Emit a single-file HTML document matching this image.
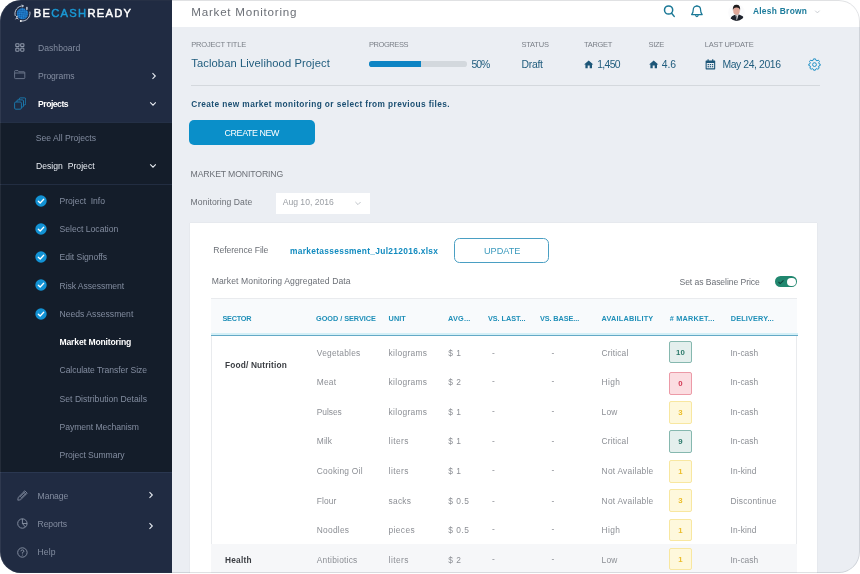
<!DOCTYPE html>
<html><head><meta charset="utf-8"><title>Market Monitoring</title>
<style>
html,body{margin:0;padding:0;background:#fff;}
body{width:860px;height:574px;position:relative;overflow:hidden;font-family:"Liberation Sans", sans-serif;}
.t{position:absolute;white-space:pre;}
.a{position:absolute;}
#app{position:absolute;left:0;top:0;width:860px;height:573px;border-radius:21px;overflow:hidden;background:#ebeef3;}
</style></head><body>
<div id="app">
<!-- sidebar -->
<div class="a" style="left:0;top:0;width:172.3px;height:573px;background:#202b42;"></div>
<div class="a" style="left:0;top:122px;width:172.3px;height:351px;background:#141d2a;"></div>
<div class="a" style="left:0;top:122px;width:172px;height:1px;background:#243046;"></div>
<div class="a" style="left:0;top:184px;width:172px;height:1px;background:#222d41;"></div>
<div class="a" style="left:0;top:472px;width:172px;height:1px;background:#2a3750;"></div>
<!-- header -->
<div class="a" style="left:172px;top:0;width:688px;height:27px;background:#ffffff;"></div>
<!-- divider under project info -->
<div class="a" style="left:191px;top:85px;width:629px;height:1px;background:#d4d8dd;"></div>
<!-- progress -->
<div class="a" style="left:369px;top:61.4px;width:97.5px;height:5.6px;border-radius:2.8px;background:#d3d8dd;"></div>
<div class="a" style="left:369px;top:61.4px;width:51.6px;height:5.6px;border-radius:2.8px 0 0 2.8px;background:#0d84c4;"></div>
<!-- create new -->
<div class="a" style="left:189px;top:119.7px;width:126px;height:25.2px;border-radius:5px;background:#0a8fc9;"></div>
<!-- date select -->
<div class="a" style="left:276px;top:193px;width:93.5px;height:20.5px;background:#ffffff;"></div>
<svg class="a" style="left:354px;top:199.5px" width="8" height="7" viewBox="0 0 8 7"><path d="M1.4 2 L4 4.6 L6.6 2" fill="none" stroke="#b9bdc3" stroke-width="0.9"/></svg>
<!-- card -->
<div class="a" style="left:190px;top:223px;width:627px;height:360px;background:#ffffff;box-shadow:0 0 1px rgba(0,0,0,0.12);"></div>
<!-- update button -->
<div class="a" style="left:454px;top:238px;border:1px solid #4a9fc3;border-radius:5.5px;box-sizing:border-box;width:95.4px;height:25.4px;"></div>
<!-- toggle -->
<div class="a" style="left:775.2px;top:276.1px;width:21.8px;height:11.2px;border-radius:6px;background:#21876f;"></div>
<div class="a" style="left:787.4px;top:277.5px;width:8.4px;height:8.4px;border-radius:50%;background:#ffffff;"></div>
<svg class="a" style="left:777.3px;top:278.6px" width="8" height="6" viewBox="0 0 8 6"><path d="M1.5 3 L3.2 4.6 L6.5 1.3" fill="none" stroke="#12443c" stroke-width="1.1"/></svg>
<!-- table -->
<div class="a" style="left:210.6px;top:298px;width:586.9px;height:290px;border:1px solid #e9ebee;box-sizing:border-box;background:#fff;"></div>
<div class="a" style="left:211px;top:299px;width:585.5px;height:35.5px;background:#f8fafc;"></div>
<div class="a" style="left:210.5px;top:333.3px;width:587px;height:1.7px;background:#d4f0f7;"></div>
<div class="a" style="left:210.5px;top:334.9px;width:587px;height:1.2px;background:#64a9c6;"></div>
<div class="a" style="left:211px;top:543.8px;width:585.5px;height:30px;background:#f6f7f9;"></div>
<!-- logo -->
<svg class="a" style="left:13px;top:3.5px" width="19" height="19" viewBox="0 0 19 19">
<defs><pattern id="chk" width="2.6" height="2.6" patternUnits="userSpaceOnUse" patternTransform="rotate(40)"><rect width="2.6" height="2.6" fill="#0f559f"/><rect width="1.3" height="1.3" fill="#2a8fdb"/><rect x="1.3" y="1.3" width="1.3" height="1.3" fill="#2a8fdb"/></pattern></defs>
<circle cx="9.5" cy="9.6" r="5.7" fill="url(#chk)"/>
<path d="M2.2 11.6 A7.5 7.5 0 0 1 9.8 1.9" fill="none" stroke="#e8eef6" stroke-width="0.8" stroke-linecap="round"/>
<path d="M8.6 0.9 L10.6 1.9 L8.9 3.2" fill="none" stroke="#e8eef6" stroke-width="0.7"/>
<path d="M16.9 8 A7.5 7.5 0 0 1 8.6 17" fill="none" stroke="#e8eef6" stroke-width="0.8" stroke-linecap="round"/>
<circle cx="7.8" cy="17.1" r="1" fill="#ffffff"/>
<circle cx="13.9" cy="4.4" r="1.9" fill="#202b42"/><rect x="13.5" y="2.8" width="0.8" height="3" fill="#e8eef6"/><path d="M14.7 3.6 Q13.2 3.2 13.2 4.1 Q13.4 4.6 14.5 4.7 Q14.7 5.6 13.1 5.3" fill="none" stroke="#e8eef6" stroke-width="0.5"/>
<circle cx="3.9" cy="12.5" r="0.8" fill="#e8eef6"/><path d="M2.5 15.3 L3.9 13.6 L5.3 15.3 M3.9 13.6 V14.6" stroke="#e8eef6" stroke-width="0.8" fill="none"/>
</svg>
<!-- dashboard icon -->
<svg class="a" style="left:14.5px;top:43px" width="10" height="9" viewBox="0 0 10 9" fill="none" stroke="#8c96a8" stroke-width="1.1">
<rect x="0.8" y="0.7" width="3.2" height="2.9" rx="0.6"/><rect x="5.7" y="0.7" width="3.2" height="2.9" rx="0.6"/><rect x="0.8" y="5.3" width="3.2" height="2.9" rx="0.6"/><rect x="5.7" y="5.3" width="3.2" height="2.9" rx="0.6"/></svg>
<!-- folder -->
<svg class="a" style="left:14px;top:70px" width="12" height="10" viewBox="0 0 12 10" fill="none" stroke="#6f7a8e" stroke-width="0.9">
<path d="M0.6 2.6 V1.3 Q0.6 0.6 1.3 0.6 H4 L5 1.8 H10 Q10.8 1.8 10.8 2.6 V7.8 Q10.8 8.6 10 8.6 H1.4 Q0.6 8.6 0.6 7.8 Z"/><path d="M0.6 3 H10.8"/></svg>
<!-- projects icon -->
<svg class="a" style="left:13.5px;top:96.5px" width="12.5" height="13" viewBox="0 0 12.5 13" fill="none" stroke="#1b7fb6" stroke-width="0.9">
<rect x="0.6" y="5" width="6.8" height="7.2" rx="1.2" fill="#202b42"/>
<path d="M2.9 5 V4 Q2.9 2.9 4 2.9 H8.4 Q9.5 2.9 9.5 4 V9 Q9.5 10 8.5 10 H7.4"/>
<path d="M5.2 2.9 V2 Q5.2 0.9 6.3 0.9 H10.6 Q11.7 0.9 11.7 2 V6.8 Q11.7 7.9 10.6 7.9 H9.5"/></svg>
<!-- chevrons sidebar -->
<svg class="a" style="left:151px;top:72px" width="6" height="8" viewBox="0 0 6 8"><path d="M1.5 1.2 L4.3 4 L1.5 6.8" fill="none" stroke="#e6eaf0" stroke-width="1.1"/></svg>
<svg class="a" style="left:149px;top:101px" width="8" height="6" viewBox="0 0 8 6"><path d="M1.2 1.4 L4 4.2 L6.8 1.4" fill="none" stroke="#e6eaf0" stroke-width="1.1"/></svg>
<svg class="a" style="left:149px;top:163px" width="8" height="6" viewBox="0 0 8 6"><path d="M1.2 1.4 L4 4.2 L6.8 1.4" fill="none" stroke="#e6eaf0" stroke-width="1.1"/></svg>
<svg class="a" style="left:148px;top:491px" width="6" height="8" viewBox="0 0 6 8"><path d="M1.5 1.2 L4.3 4 L1.5 6.8" fill="none" stroke="#e6eaf0" stroke-width="1.1"/></svg>
<svg class="a" style="left:148px;top:522px" width="6" height="8" viewBox="0 0 6 8"><path d="M1.5 1.2 L4.3 4 L1.5 6.8" fill="none" stroke="#e6eaf0" stroke-width="1.1"/></svg>
<!-- manage pencil -->
<svg class="a" style="left:17px;top:490px" width="11" height="11" viewBox="0 0 11 11" fill="none" stroke="#8c96a8" stroke-width="0.8">
<path d="M7.8 0.8 L10.2 3.2 L3.6 9.8 L0.8 10.2 L1.2 7.4 Z"/><path d="M6.6 2 L9 4.4"/><path d="M2.6 7.2 L7.4 2.4 M3.8 8.4 L8.6 3.6"/></svg>
<!-- reports -->
<svg class="a" style="left:17px;top:518px" width="11" height="11" viewBox="0 0 11 11" fill="none" stroke="#8c96a8" stroke-width="0.9">
<circle cx="5.4" cy="5.5" r="4.7"/><path d="M5.4 0.8 V5.5 H10.1 M5.4 5.5 L8.4 9"/></svg>
<!-- help -->
<svg class="a" style="left:17px;top:547px" width="11" height="11" viewBox="0 0 11 11" fill="none" stroke="#8c96a8" stroke-width="0.9">
<circle cx="5.4" cy="5.5" r="4.7"/><path d="M3.9 4.3 Q3.9 2.9 5.4 2.9 Q6.9 2.9 6.9 4.2 Q6.9 5.1 5.4 5.6 V6.6" stroke-width="0.9"/><circle cx="5.4" cy="8" r="0.5" fill="#8c96a8" stroke="none"/></svg>
<!-- search -->
<svg class="a" style="left:663px;top:4px" width="13" height="14" viewBox="0 0 13 14" fill="none" stroke="#1a7896" stroke-width="1.5" stroke-linecap="round">
<circle cx="5.6" cy="6" r="4.1"/><path d="M8.6 9.2 L11.2 12.4"/></svg>
<!-- bell -->
<svg class="a" style="left:690px;top:4px" width="14" height="14" viewBox="0 0 14 14" fill="none" stroke="#1a7896" stroke-width="1.25" stroke-linejoin="round">
<path d="M1.6 10.6 Q3.2 9 3.2 6 Q3.2 2.2 6.9 2.2 Q10.6 2.2 10.6 6 Q10.6 9 12.2 10.6 Z"/><path d="M5.6 11 Q5.8 12.6 6.9 12.6 Q8 12.6 8.2 11"/><path d="M6.9 2.2 V1.2"/></svg>
<!-- avatar -->
<svg class="a" style="left:728px;top:3.5px" width="17" height="17" viewBox="0 0 17 17">
<defs><clipPath id="avc"><circle cx="8.5" cy="8.5" r="8.4"/></clipPath></defs>
<circle cx="8.5" cy="8.5" r="8.4" fill="#fbfbfc"/>
<g clip-path="url(#avc)">
<path d="M2.4 14.6 Q3.5 11.6 6.4 10.9 L8.5 10.3 L11.6 10.8 Q15.4 11.8 16.4 14.6 Q13.5 17.4 8.6 17.2 Q4.5 17 2.4 14.6 Z" fill="#1e222c"/>
<path d="M7.4 10.6 L8.7 16.8 L10.6 10.6 Z" fill="#f4f4f5"/>
<path d="M8.3 11.6 L8.6 16.6 L9.3 11.6 Z" fill="#3a3f4a"/>
<ellipse cx="8.5" cy="6.4" rx="3.3" ry="4.3" fill="#dfa89a"/>
<path d="M4.9 6.4 Q4.3 0.6 8.5 0.7 Q12.7 0.6 12.1 6.4 Q11.7 3.4 8.5 3.5 Q5.3 3.4 4.9 6.4 Z" fill="#1d1b1c"/>
</g></svg>
<svg class="a" style="left:814px;top:8.5px" width="7" height="6" viewBox="0 0 7 6"><path d="M1.2 1.7 L3.4 3.9 L5.6 1.7" fill="none" stroke="#c3c7cd" stroke-width="0.9"/></svg>
<!-- home icons -->
<svg class="a" style="left:584px;top:59.5px" width="10" height="9" viewBox="0 0 10 9"><path d="M4.7 0.4 L9.3 4.6 H8 V8.2 H5.7 V5.6 H3.7 V8.2 H1.4 V4.6 H0.1 Z" fill="#1d5678"/></svg>
<svg class="a" style="left:648.8px;top:59.5px" width="10" height="9" viewBox="0 0 10 9"><path d="M4.7 0.4 L9.3 4.6 H8 V8.2 H5.7 V5.6 H3.7 V8.2 H1.4 V4.6 H0.1 Z" fill="#1d5678"/></svg>
<!-- calendar -->
<svg class="a" style="left:705px;top:58.5px" width="11" height="11" viewBox="0 0 11 11"><path d="M0.6 2 Q0.6 1.4 1.2 1.4 H9.6 Q10.2 1.4 10.2 2 V9.8 Q10.2 10.4 9.6 10.4 H1.2 Q0.6 10.4 0.6 9.8 Z M1.7 4 V9.3 H9.1 V4 Z" fill="#1d5678" fill-rule="evenodd"/><rect x="2.5" y="0.3" width="1.2" height="2.2" fill="#1d5678"/><rect x="7.1" y="0.3" width="1.2" height="2.2" fill="#1d5678"/>
<rect x="2.6" y="5" width="1.3" height="1.2" fill="#1d5678"/><rect x="4.75" y="5" width="1.3" height="1.2" fill="#1d5678"/><rect x="6.9" y="5" width="1.3" height="1.2" fill="#1d5678"/><rect x="2.6" y="7.1" width="1.3" height="1.2" fill="#1d5678"/><rect x="4.75" y="7.1" width="1.3" height="1.2" fill="#1d5678"/><rect x="6.9" y="7.1" width="1.3" height="1.2" fill="#1d5678"/></svg>
<!-- gear -->
<svg class="a" style="left:808px;top:57.7px" width="13" height="13" viewBox="-6.5 -6.5 13 13" fill="none" stroke="#1a8dc4" stroke-width="0.95" stroke-linejoin="round">
<path d="M-1 -5.6 H1 L1.4 -4.2 L2.5 -3.7 L3.8 -4.4 L5 -3 L4.2 -1.8 L4.5 -0.8 L5.7 -0.4 V1 L4.4 1.4 L4 2.4 L4.7 3.6 L3.4 4.8 L2.3 4.1 L1.3 4.5 L0.9 5.7 H-0.9 L-1.3 4.5 L-2.3 4.1 L-3.4 4.8 L-4.7 3.6 L-4 2.4 L-4.4 1.4 L-5.7 1 V-0.4 L-4.5 -0.8 L-4.2 -1.8 L-5 -3 L-3.8 -4.4 L-2.5 -3.7 L-1.4 -4.2 Z"/><circle cx="0" cy="0.1" r="1.9"/></svg>
<!-- checks -->
<svg class="a" style="left:35.3px;top:194.60px" width="12" height="12" viewBox="0 0 12 12"><circle cx="6" cy="6" r="5.7" fill="#1292d4"/><path d="M3.3 6.2 L5.2 8 L8.7 4.2" fill="none" stroke="#ffffff" stroke-width="1.3" stroke-linecap="round" stroke-linejoin="round"/></svg>
<svg class="a" style="left:35.3px;top:222.80px" width="12" height="12" viewBox="0 0 12 12"><circle cx="6" cy="6" r="5.7" fill="#1292d4"/><path d="M3.3 6.2 L5.2 8 L8.7 4.2" fill="none" stroke="#ffffff" stroke-width="1.3" stroke-linecap="round" stroke-linejoin="round"/></svg>
<svg class="a" style="left:35.3px;top:251.10px" width="12" height="12" viewBox="0 0 12 12"><circle cx="6" cy="6" r="5.7" fill="#1292d4"/><path d="M3.3 6.2 L5.2 8 L8.7 4.2" fill="none" stroke="#ffffff" stroke-width="1.3" stroke-linecap="round" stroke-linejoin="round"/></svg>
<svg class="a" style="left:35.3px;top:279.40px" width="12" height="12" viewBox="0 0 12 12"><circle cx="6" cy="6" r="5.7" fill="#1292d4"/><path d="M3.3 6.2 L5.2 8 L8.7 4.2" fill="none" stroke="#ffffff" stroke-width="1.3" stroke-linecap="round" stroke-linejoin="round"/></svg>
<svg class="a" style="left:35.3px;top:307.60px" width="12" height="12" viewBox="0 0 12 12"><circle cx="6" cy="6" r="5.7" fill="#1292d4"/><path d="M3.3 6.2 L5.2 8 L8.7 4.2" fill="none" stroke="#ffffff" stroke-width="1.3" stroke-linecap="round" stroke-linejoin="round"/></svg>

<div class="a" style="left:669.1px;top:340.90px;width:22.6px;height:22.6px;box-sizing:border-box;border:1px solid #86b8af;border-radius:2px;background:#e4efed;"></div>
<div class="a" style="left:669.1px;top:372.00px;width:22.6px;height:22.6px;box-sizing:border-box;border:1px solid #ec9aa7;border-radius:2px;background:#fbdde1;"></div>
<div class="a" style="left:669.1px;top:401.10px;width:22.6px;height:22.6px;box-sizing:border-box;border:1px solid #f8e7a0;border-radius:2px;background:#fef8dc;"></div>
<div class="a" style="left:669.1px;top:430.10px;width:22.6px;height:22.6px;box-sizing:border-box;border:1px solid #86b8af;border-radius:2px;background:#e4efed;"></div>
<div class="a" style="left:669.1px;top:460.10px;width:22.6px;height:22.6px;box-sizing:border-box;border:1px solid #f8e7a0;border-radius:2px;background:#fef8dc;"></div>
<div class="a" style="left:669.1px;top:489.10px;width:22.6px;height:22.6px;box-sizing:border-box;border:1px solid #f8e7a0;border-radius:2px;background:#fef8dc;"></div>
<div class="a" style="left:669.1px;top:518.80px;width:22.6px;height:22.6px;box-sizing:border-box;border:1px solid #f8e7a0;border-radius:2px;background:#fef8dc;"></div>
<div class="a" style="left:669.1px;top:547.90px;width:22.6px;height:22.6px;box-sizing:border-box;border:1px solid #f8e7a0;border-radius:2px;background:#fef8dc;"></div>

<div id="txt" style="position:absolute;left:0;top:0;width:860px;height:573px;will-change:transform;">
<span class="t" style="left:33.80px;top:7.46px;font-size:11.2px;line-height:12.88px;color:#ffffff;letter-spacing:1.262px;-webkit-text-stroke:0.45px;">BE<span style="color:#1a9ad6">CASH</span>READY</span>
<span class="t" style="left:38.00px;top:43.55px;font-size:8.6px;line-height:9.89px;color:#838da0;letter-spacing:0.019px;">Dashboard</span>
<span class="t" style="left:38.00px;top:71.76px;font-size:8.6px;line-height:9.89px;color:#838da0;letter-spacing:-0.093px;">Programs</span>
<span class="t" style="left:38.00px;top:100.06px;font-size:8.6px;line-height:9.89px;color:#ffffff;font-weight:700;letter-spacing:-0.475px;">Projects</span>
<span class="t" style="left:35.80px;top:133.75px;font-size:8.6px;line-height:9.89px;color:#838da0;letter-spacing:0.001px;">See All Projects</span>
<span class="t" style="left:36.00px;top:161.56px;font-size:8.6px;line-height:9.89px;color:#e8ecf2;letter-spacing:0.023px;">Design &nbsp;Project</span>
<span class="t" style="left:59.50px;top:196.75px;font-size:8.6px;line-height:9.89px;color:#838da0;letter-spacing:-0.030px;">Project &nbsp;Info</span>
<span class="t" style="left:59.50px;top:224.50px;font-size:8.6px;line-height:9.89px;color:#838da0;letter-spacing:0.002px;">Select Location</span>
<span class="t" style="left:59.50px;top:252.75px;font-size:8.6px;line-height:9.89px;color:#838da0;letter-spacing:-0.049px;">Edit Signoffs</span>
<span class="t" style="left:59.50px;top:281.56px;font-size:8.6px;line-height:9.89px;color:#838da0;letter-spacing:-0.053px;">Risk Assessment</span>
<span class="t" style="left:59.50px;top:309.75px;font-size:8.6px;line-height:9.89px;color:#838da0;letter-spacing:0.016px;">Needs Assessment</span>
<span class="t" style="left:59.50px;top:337.50px;font-size:8.6px;line-height:9.89px;color:#ffffff;font-weight:700;letter-spacing:-0.168px;">Market Monitoring</span>
<span class="t" style="left:59.50px;top:365.75px;font-size:8.6px;line-height:9.89px;color:#838da0;letter-spacing:-0.061px;">Calculate Transfer Size</span>
<span class="t" style="left:59.50px;top:394.56px;font-size:8.6px;line-height:9.89px;color:#838da0;letter-spacing:0.024px;">Set Distribution Details</span>
<span class="t" style="left:59.50px;top:422.86px;font-size:8.6px;line-height:9.89px;color:#838da0;letter-spacing:-0.047px;">Payment Mechanism</span>
<span class="t" style="left:59.50px;top:450.50px;font-size:8.6px;line-height:9.89px;color:#838da0;letter-spacing:-0.065px;">Project Summary</span>
<span class="t" style="left:37.60px;top:491.86px;font-size:8.6px;line-height:9.89px;color:#838da0;letter-spacing:-0.073px;">Manage</span>
<span class="t" style="left:37.60px;top:520.05px;font-size:8.6px;line-height:9.89px;color:#838da0;letter-spacing:-0.116px;">Reports</span>
<span class="t" style="left:37.60px;top:547.96px;font-size:8.6px;line-height:9.89px;color:#838da0;letter-spacing:0.071px;">Help</span>
<span class="t" style="left:191.30px;top:5.43px;font-size:11.6px;line-height:13.34px;color:#6b6f76;letter-spacing:0.769px;">Market Monitoring</span>
<span class="t" style="left:752.90px;top:6.87px;font-size:8.4px;line-height:9.66px;color:#1b7b9b;font-weight:700;letter-spacing:0.291px;">Alesh Brown</span>
<span class="t" style="left:191.30px;top:40.99px;font-size:7.5px;line-height:8.62px;color:#7a7f87;letter-spacing:-0.196px;">PROJECT TITLE</span>
<span class="t" style="left:191.30px;top:56.76px;font-size:11.2px;line-height:12.88px;color:#215d7e;letter-spacing:0.088px;">Tacloban Livelihood Project</span>
<span class="t" style="left:369.00px;top:40.99px;font-size:7.5px;line-height:8.62px;color:#7a7f87;letter-spacing:-0.431px;">PROGRESS</span>
<span class="t" style="left:471.60px;top:59.02px;font-size:10.4px;line-height:11.96px;color:#215d7e;letter-spacing:-1.048px;">50%</span>
<span class="t" style="left:521.40px;top:40.99px;font-size:7.5px;line-height:8.62px;color:#7a7f87;letter-spacing:-0.177px;">STATUS</span>
<span class="t" style="left:521.40px;top:59.02px;font-size:10.4px;line-height:11.96px;color:#215d7e;letter-spacing:-0.233px;">Draft</span>
<span class="t" style="left:584.00px;top:40.99px;font-size:7.5px;line-height:8.62px;color:#7a7f87;letter-spacing:-0.315px;">TARGET</span>
<span class="t" style="left:597.20px;top:59.02px;font-size:10.4px;line-height:11.96px;color:#215d7e;letter-spacing:-0.654px;">1,450</span>
<span class="t" style="left:648.60px;top:40.99px;font-size:7.5px;line-height:8.62px;color:#7a7f87;letter-spacing:-0.357px;">SIZE</span>
<span class="t" style="left:661.80px;top:59.02px;font-size:10.4px;line-height:11.96px;color:#215d7e;letter-spacing:-0.127px;">4.6</span>
<span class="t" style="left:704.70px;top:40.99px;font-size:7.5px;line-height:8.62px;color:#7a7f87;letter-spacing:-0.158px;">LAST UPDATE</span>
<span class="t" style="left:722.40px;top:59.02px;font-size:10.4px;line-height:11.96px;color:#215d7e;letter-spacing:-0.397px;">May 24, 2016</span>
<span class="t" style="left:191.30px;top:100.23px;font-size:8.3px;line-height:9.54px;color:#1b4f72;font-weight:700;letter-spacing:0.407px;">Create new market monitoring or select from previous files.</span>
<span class="t" style="left:224.60px;top:127.78px;font-size:8.9px;line-height:10.23px;color:#ffffff;letter-spacing:-0.402px;">CREATE NEW</span>
<span class="t" style="left:190.60px;top:168.50px;font-size:8.7px;line-height:10.00px;color:#6b6f76;letter-spacing:-0.135px;">MARKET MONITORING</span>
<span class="t" style="left:190.60px;top:198.16px;font-size:8.6px;line-height:9.89px;color:#6b6f76;letter-spacing:0.066px;">Monitoring Date</span>
<span class="t" style="left:282.70px;top:198.16px;font-size:8.6px;line-height:9.89px;color:#9a9ea4;letter-spacing:-0.004px;">Aug 10, 2016</span>
<span class="t" style="left:213.30px;top:246.35px;font-size:8.6px;line-height:9.89px;color:#6b6f76;letter-spacing:-0.061px;">Reference File</span>
<span class="t" style="left:290.00px;top:247.27px;font-size:8.4px;line-height:9.66px;color:#128bbf;font-weight:700;letter-spacing:0.308px;">marketassessment_Jul212016.xlsx</span>
<span class="t" style="left:484.00px;top:246.41px;font-size:9.2px;line-height:10.58px;color:#3c9abd;letter-spacing:-0.039px;">UPDATE</span>
<span class="t" style="left:211.70px;top:277.25px;font-size:8.6px;line-height:9.89px;color:#6b6f76;letter-spacing:0.101px;">Market Monitoring Aggregated Data</span>
<span class="t" style="left:679.50px;top:278.06px;font-size:8.6px;line-height:9.89px;color:#6b6f76;letter-spacing:-0.069px;">Set as Baseline Price</span>
<span class="t" style="left:222.50px;top:315.30px;font-size:7.3px;line-height:8.39px;color:#1f8fb8;font-weight:700;letter-spacing:-0.256px;">SECTOR</span>
<span class="t" style="left:316.00px;top:315.30px;font-size:7.3px;line-height:8.39px;color:#1f8fb8;font-weight:700;letter-spacing:-0.029px;">GOOD / SERVICE</span>
<span class="t" style="left:388.60px;top:315.30px;font-size:7.3px;line-height:8.39px;color:#1f8fb8;font-weight:700;letter-spacing:0.056px;">UNIT</span>
<span class="t" style="left:448.00px;top:315.30px;font-size:7.3px;line-height:8.39px;color:#1f8fb8;font-weight:700;letter-spacing:0.208px;">AVG...</span>
<span class="t" style="left:488.00px;top:315.30px;font-size:7.3px;line-height:8.39px;color:#1f8fb8;font-weight:700;letter-spacing:-0.062px;">VS. LAST...</span>
<span class="t" style="left:539.90px;top:315.30px;font-size:7.3px;line-height:8.39px;color:#1f8fb8;font-weight:700;letter-spacing:-0.086px;">VS. BASE...</span>
<span class="t" style="left:601.60px;top:315.30px;font-size:7.3px;line-height:8.39px;color:#1f8fb8;font-weight:700;letter-spacing:0.219px;">AVAILABILITY</span>
<span class="t" style="left:669.80px;top:315.30px;font-size:7.3px;line-height:8.39px;color:#1f8fb8;font-weight:700;letter-spacing:0.212px;"># MARKET...</span>
<span class="t" style="left:730.80px;top:315.30px;font-size:7.3px;line-height:8.39px;color:#1f8fb8;font-weight:700;letter-spacing:0.150px;">DELIVERY...</span>
<span class="t" style="left:316.80px;top:349.07px;font-size:8.4px;line-height:9.66px;color:#8c8f95;letter-spacing:0.227px;">Vegetables</span>
<span class="t" style="left:388.60px;top:349.07px;font-size:8.4px;line-height:9.66px;color:#8c8f95;letter-spacing:0.320px;">kilograms</span>
<span class="t" style="left:448.30px;top:349.07px;font-size:8.4px;line-height:9.66px;color:#8c8f95;letter-spacing:0.000px;">$</span>
<span class="t" style="left:456.20px;top:349.07px;font-size:8.4px;line-height:9.66px;color:#8c8f95;letter-spacing:0.000px;">1</span>
<span class="t" style="left:492.00px;top:348.57px;font-size:8.4px;line-height:9.66px;color:#8c8f95;letter-spacing:0.000px;">-</span>
<span class="t" style="left:551.60px;top:348.57px;font-size:8.4px;line-height:9.66px;color:#8c8f95;letter-spacing:0.000px;">-</span>
<span class="t" style="left:601.60px;top:349.07px;font-size:8.4px;line-height:9.66px;color:#8c8f95;letter-spacing:0.158px;">Critical</span>
<span class="t" style="left:730.50px;top:349.07px;font-size:8.4px;line-height:9.66px;color:#8c8f95;letter-spacing:0.039px;">In-cash</span>
<span class="t" style="left:316.80px;top:377.67px;font-size:8.4px;line-height:9.66px;color:#8c8f95;letter-spacing:0.192px;">Meat</span>
<span class="t" style="left:388.60px;top:377.67px;font-size:8.4px;line-height:9.66px;color:#8c8f95;letter-spacing:0.320px;">kilograms</span>
<span class="t" style="left:448.30px;top:377.67px;font-size:8.4px;line-height:9.66px;color:#8c8f95;letter-spacing:0.000px;">$</span>
<span class="t" style="left:456.20px;top:377.67px;font-size:8.4px;line-height:9.66px;color:#8c8f95;letter-spacing:0.000px;">2</span>
<span class="t" style="left:492.00px;top:377.17px;font-size:8.4px;line-height:9.66px;color:#8c8f95;letter-spacing:0.000px;">-</span>
<span class="t" style="left:551.60px;top:377.17px;font-size:8.4px;line-height:9.66px;color:#8c8f95;letter-spacing:0.000px;">-</span>
<span class="t" style="left:601.60px;top:377.67px;font-size:8.4px;line-height:9.66px;color:#8c8f95;letter-spacing:0.322px;">High</span>
<span class="t" style="left:730.50px;top:377.67px;font-size:8.4px;line-height:9.66px;color:#8c8f95;letter-spacing:0.039px;">In-cash</span>
<span class="t" style="left:316.80px;top:407.67px;font-size:8.4px;line-height:9.66px;color:#8c8f95;letter-spacing:-0.028px;">Pulses</span>
<span class="t" style="left:388.60px;top:407.67px;font-size:8.4px;line-height:9.66px;color:#8c8f95;letter-spacing:0.320px;">kilograms</span>
<span class="t" style="left:448.30px;top:407.67px;font-size:8.4px;line-height:9.66px;color:#8c8f95;letter-spacing:0.000px;">$</span>
<span class="t" style="left:456.20px;top:407.67px;font-size:8.4px;line-height:9.66px;color:#8c8f95;letter-spacing:0.000px;">1</span>
<span class="t" style="left:492.00px;top:407.17px;font-size:8.4px;line-height:9.66px;color:#8c8f95;letter-spacing:0.000px;">-</span>
<span class="t" style="left:551.60px;top:407.17px;font-size:8.4px;line-height:9.66px;color:#8c8f95;letter-spacing:0.000px;">-</span>
<span class="t" style="left:601.60px;top:407.67px;font-size:8.4px;line-height:9.66px;color:#8c8f95;letter-spacing:0.162px;">Low</span>
<span class="t" style="left:730.50px;top:407.67px;font-size:8.4px;line-height:9.66px;color:#8c8f95;letter-spacing:0.039px;">In-cash</span>
<span class="t" style="left:316.80px;top:437.47px;font-size:8.4px;line-height:9.66px;color:#8c8f95;letter-spacing:0.103px;">Milk</span>
<span class="t" style="left:388.60px;top:437.47px;font-size:8.4px;line-height:9.66px;color:#8c8f95;letter-spacing:0.442px;">liters</span>
<span class="t" style="left:448.30px;top:437.47px;font-size:8.4px;line-height:9.66px;color:#8c8f95;letter-spacing:0.000px;">$</span>
<span class="t" style="left:456.20px;top:437.47px;font-size:8.4px;line-height:9.66px;color:#8c8f95;letter-spacing:0.000px;">1</span>
<span class="t" style="left:492.00px;top:436.97px;font-size:8.4px;line-height:9.66px;color:#8c8f95;letter-spacing:0.000px;">-</span>
<span class="t" style="left:551.60px;top:436.97px;font-size:8.4px;line-height:9.66px;color:#8c8f95;letter-spacing:0.000px;">-</span>
<span class="t" style="left:601.60px;top:437.47px;font-size:8.4px;line-height:9.66px;color:#8c8f95;letter-spacing:0.158px;">Critical</span>
<span class="t" style="left:730.50px;top:437.47px;font-size:8.4px;line-height:9.66px;color:#8c8f95;letter-spacing:0.039px;">In-cash</span>
<span class="t" style="left:316.80px;top:466.67px;font-size:8.4px;line-height:9.66px;color:#8c8f95;letter-spacing:0.240px;">Cooking Oil</span>
<span class="t" style="left:388.60px;top:466.67px;font-size:8.4px;line-height:9.66px;color:#8c8f95;letter-spacing:0.442px;">liters</span>
<span class="t" style="left:448.30px;top:466.67px;font-size:8.4px;line-height:9.66px;color:#8c8f95;letter-spacing:0.000px;">$</span>
<span class="t" style="left:456.20px;top:466.67px;font-size:8.4px;line-height:9.66px;color:#8c8f95;letter-spacing:0.000px;">1</span>
<span class="t" style="left:492.00px;top:466.17px;font-size:8.4px;line-height:9.66px;color:#8c8f95;letter-spacing:0.000px;">-</span>
<span class="t" style="left:551.60px;top:466.17px;font-size:8.4px;line-height:9.66px;color:#8c8f95;letter-spacing:0.000px;">-</span>
<span class="t" style="left:601.60px;top:466.67px;font-size:8.4px;line-height:9.66px;color:#8c8f95;letter-spacing:0.239px;">Not Available</span>
<span class="t" style="left:730.50px;top:466.67px;font-size:8.4px;line-height:9.66px;color:#8c8f95;letter-spacing:0.127px;">In-kind</span>
<span class="t" style="left:316.80px;top:497.07px;font-size:8.4px;line-height:9.66px;color:#8c8f95;letter-spacing:0.102px;">Flour</span>
<span class="t" style="left:388.60px;top:497.07px;font-size:8.4px;line-height:9.66px;color:#8c8f95;letter-spacing:0.245px;">sacks</span>
<span class="t" style="left:448.30px;top:497.07px;font-size:8.4px;line-height:9.66px;color:#8c8f95;letter-spacing:0.000px;">$</span>
<span class="t" style="left:456.20px;top:497.07px;font-size:8.4px;line-height:9.66px;color:#8c8f95;letter-spacing:0.572px;">0.5</span>
<span class="t" style="left:492.00px;top:496.57px;font-size:8.4px;line-height:9.66px;color:#8c8f95;letter-spacing:0.000px;">-</span>
<span class="t" style="left:551.60px;top:496.57px;font-size:8.4px;line-height:9.66px;color:#8c8f95;letter-spacing:0.000px;">-</span>
<span class="t" style="left:601.60px;top:497.07px;font-size:8.4px;line-height:9.66px;color:#8c8f95;letter-spacing:0.239px;">Not Available</span>
<span class="t" style="left:730.50px;top:497.07px;font-size:8.4px;line-height:9.66px;color:#8c8f95;letter-spacing:0.203px;">Discontinue</span>
<span class="t" style="left:316.80px;top:525.97px;font-size:8.4px;line-height:9.66px;color:#8c8f95;letter-spacing:0.244px;">Noodles</span>
<span class="t" style="left:388.60px;top:525.97px;font-size:8.4px;line-height:9.66px;color:#8c8f95;letter-spacing:0.356px;">pieces</span>
<span class="t" style="left:448.30px;top:525.97px;font-size:8.4px;line-height:9.66px;color:#8c8f95;letter-spacing:0.000px;">$</span>
<span class="t" style="left:456.20px;top:525.97px;font-size:8.4px;line-height:9.66px;color:#8c8f95;letter-spacing:0.572px;">0.5</span>
<span class="t" style="left:492.00px;top:525.47px;font-size:8.4px;line-height:9.66px;color:#8c8f95;letter-spacing:0.000px;">-</span>
<span class="t" style="left:551.60px;top:525.47px;font-size:8.4px;line-height:9.66px;color:#8c8f95;letter-spacing:0.000px;">-</span>
<span class="t" style="left:601.60px;top:525.97px;font-size:8.4px;line-height:9.66px;color:#8c8f95;letter-spacing:0.322px;">High</span>
<span class="t" style="left:730.50px;top:525.97px;font-size:8.4px;line-height:9.66px;color:#8c8f95;letter-spacing:0.127px;">In-kind</span>
<span class="t" style="left:316.80px;top:555.87px;font-size:8.4px;line-height:9.66px;color:#8c8f95;letter-spacing:0.233px;">Antibiotics</span>
<span class="t" style="left:388.60px;top:555.87px;font-size:8.4px;line-height:9.66px;color:#8c8f95;letter-spacing:0.442px;">liters</span>
<span class="t" style="left:448.30px;top:555.87px;font-size:8.4px;line-height:9.66px;color:#8c8f95;letter-spacing:0.000px;">$</span>
<span class="t" style="left:456.20px;top:555.87px;font-size:8.4px;line-height:9.66px;color:#8c8f95;letter-spacing:0.000px;">2</span>
<span class="t" style="left:492.00px;top:555.37px;font-size:8.4px;line-height:9.66px;color:#8c8f95;letter-spacing:0.000px;">-</span>
<span class="t" style="left:551.60px;top:555.37px;font-size:8.4px;line-height:9.66px;color:#8c8f95;letter-spacing:0.000px;">-</span>
<span class="t" style="left:601.60px;top:555.87px;font-size:8.4px;line-height:9.66px;color:#8c8f95;letter-spacing:0.162px;">Low</span>
<span class="t" style="left:730.50px;top:555.87px;font-size:8.4px;line-height:9.66px;color:#8c8f95;letter-spacing:0.039px;">In-cash</span>
<span class="t" style="left:225.00px;top:360.93px;font-size:8.3px;line-height:9.54px;color:#3a3d42;font-weight:700;letter-spacing:0.168px;">Food/ Nutrition</span>
<span class="t" style="left:225.00px;top:555.73px;font-size:8.3px;line-height:9.54px;color:#3a3d42;font-weight:700;letter-spacing:0.228px;">Health</span>
<span class="t" style="left:676.10px;top:348.71px;font-size:7.8px;line-height:8.97px;color:#2d7a6b;font-weight:700;letter-spacing:0.112px;">10</span>
<span class="t" style="left:678.30px;top:379.81px;font-size:7.8px;line-height:8.97px;color:#d23a55;font-weight:700;letter-spacing:0.000px;">0</span>
<span class="t" style="left:678.30px;top:408.91px;font-size:7.8px;line-height:8.97px;color:#ebbd2b;font-weight:700;letter-spacing:0.000px;">3</span>
<span class="t" style="left:678.30px;top:437.91px;font-size:7.8px;line-height:8.97px;color:#2d7a6b;font-weight:700;letter-spacing:0.000px;">9</span>
<span class="t" style="left:678.30px;top:467.91px;font-size:7.8px;line-height:8.97px;color:#ebbd2b;font-weight:700;letter-spacing:0.000px;">1</span>
<span class="t" style="left:678.30px;top:496.91px;font-size:7.8px;line-height:8.97px;color:#ebbd2b;font-weight:700;letter-spacing:0.000px;">3</span>
<span class="t" style="left:678.30px;top:526.62px;font-size:7.8px;line-height:8.97px;color:#ebbd2b;font-weight:700;letter-spacing:0.000px;">1</span>
<span class="t" style="left:678.30px;top:555.72px;font-size:7.8px;line-height:8.97px;color:#ebbd2b;font-weight:700;letter-spacing:0.000px;">1</span>
</div>
<div class="a" style="left:0;top:0;width:860px;height:573px;box-sizing:border-box;border-radius:21px;border:1px solid rgba(70,80,90,0.17);border-left-color:rgba(255,255,255,0.07);pointer-events:none;"></div>
</div>
</body></html>
